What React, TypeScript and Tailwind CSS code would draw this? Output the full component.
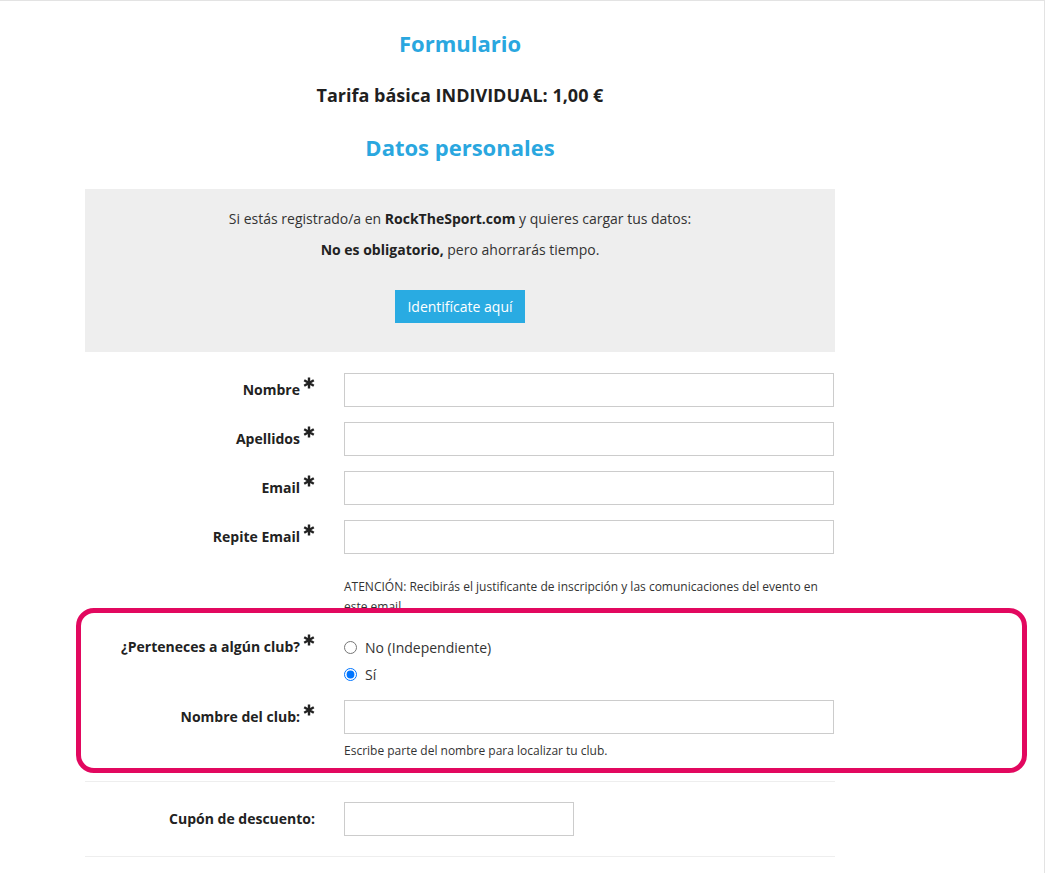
import React from 'react';

// Asterisco de campo obligatorio
const Req = () => (
  <svg viewBox="0 0 12 12" className="ml-[3px] h-[12px] w-[12px] self-start mt-[-3px]" fill="none" stroke="#222" strokeWidth={2.4} strokeLinecap="butt">
    <path d="M6 0.5v11M1.2 3.25l9.6 5.5M1.2 8.75l9.6-5.5" />
  </svg>
);

type RowProps = {
  label: string;
  required?: boolean;
  children: React.ReactNode;
  className?: string;
};

const Row = ({ label, required, children, className = '' }: RowProps) => (
  <div className={`flex ${className}`}>
    <div className="w-[230px] shrink-0 flex justify-end items-start h-[34px] pt-[7px]">
      <span className="flex items-start text-[14px] leading-[20px] font-bold text-[#222]">
        {label}
        {required && <Req />}
      </span>
    </div>
    <div className="ml-[29px] w-[490px]">{children}</div>
  </div>
);

const Input = ({ w = 'w-[490px]' }: { w?: string }) => (
  <input type="text" className={`${w} h-[34px] border border-[#cccccc] bg-white outline-none block`} />
);

export default function App() {
  return (
    <div className="w-[1045px] min-h-[873px] border-t border-r border-[#e3e3e3] bg-white text-[#222]" style={{ fontFamily: '"Open Sans", "Liberation Sans", sans-serif' }}>
      <div className="ml-[85px] w-[750px] pb-[16px]">
        <h1 className="mt-[27px] text-center text-[22px] leading-[30px] font-bold text-[#2aa7df]">Formulario</h1>
        <p className="mt-[24px] text-center text-[18px] leading-[26px] font-bold text-[#1f1f1f]">
          Tarifa básica INDIVIDUAL: 1,00 €
        </p>
        <h2 className="mt-[24px] text-center text-[22px] leading-[30px] font-bold text-[#2aa7df]">Datos personales</h2>

        {/* Caja de login */}
        <div className="mt-[27px] bg-[#eeeeee] pt-[20px] pb-[29px] text-center text-[14px] leading-[20px] text-[#333]">
          <p>
            Si estás registrado/a en <b className="font-bold text-[#222]">RockTheSport.com</b> y quieres cargar tus datos:
          </p>
          <p className="mt-[11px]">
            <b className="font-bold text-[#222]">No es obligatorio,</b> pero ahorrarás tiempo.
          </p>
          <button className="mt-[30px] h-[33px] w-[130px] bg-[#29abe2] text-white text-[14px]">Identifícate aquí</button>
        </div>

        <div className="mt-[21px] flex flex-col gap-[15px]">
          <Row label="Nombre" required><Input /></Row>
          <Row label="Apellidos" required><Input /></Row>
          <Row label="Email" required><Input /></Row>
          <Row label="Repite Email" required><Input /></Row>
        </div>

        <div className="ml-[259px] w-[490px] mt-[23px] text-[12px] leading-[20px] text-[#333]">
          ATENCIÓN: Recibirás el justificante de inscripción y las comunicaciones del evento en este email.
        </div>

        {/* Sección club con el recuadro resaltado */}
        <div className="relative mt-[17px]">
          <div className="absolute top-[-26px] bottom-[-12px] left-[-9px] right-[-192px] border-[5px] border-[#e2085f] rounded-[18px] z-10 pointer-events-none" />
          <div className="flex">
            <div className="w-[230px] shrink-0 flex justify-end pt-[3px]">
              <span className="flex items-start text-[14px] leading-[20px] font-bold text-[#222]">
                ¿Perteneces a algún club?
                <Req />
              </span>
            </div>
            <div className="ml-[29px] text-[14px] text-[#333]">
              <label className="flex items-center h-[27px] gap-[8px]">
                <input type="radio" name="club" className="m-0 w-[13px] h-[13px]" />
                No (Independiente)
              </label>
              <label className="flex items-center h-[27px] gap-[8px]">
                <input type="radio" name="club" defaultChecked className="m-0 w-[13px] h-[13px]" />
                Sí
              </label>
            </div>
          </div>
          <Row label="Nombre del club:" required className="mt-[12px]">
            <Input />
            <p className="mt-[7px] text-[12px] leading-[20px] text-[#333]">Escribe parte del nombre para localizar tu club.</p>
          </Row>
        </div>

        <hr className="mt-[20px] border-0 border-t border-[#eeeeee]" />
        <Row label="Cupón de descuento:" className="mt-[20px]">
          <Input w="w-[230px]" />
        </Row>
        <hr className="mt-[20px] border-0 border-t border-[#eeeeee]" />
      </div>
    </div>
  );
}
